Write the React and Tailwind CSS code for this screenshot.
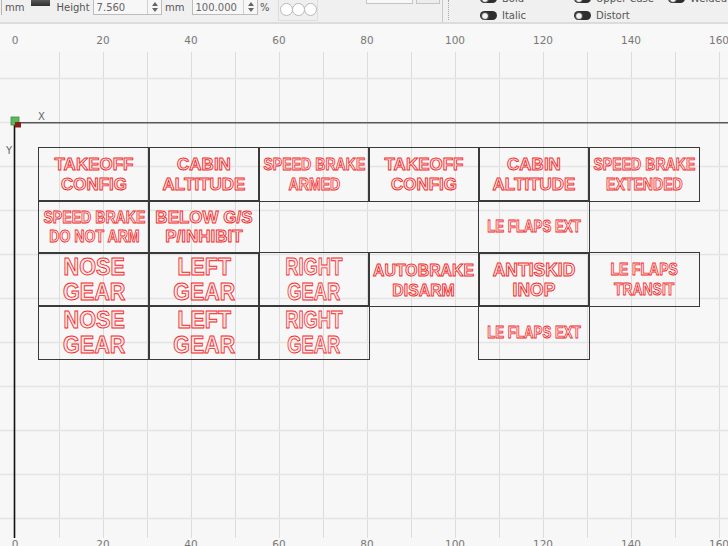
import React from "react";

const UI = "font-['DejaVu_Sans',Verdana,sans-serif]";
const TXT = "font-['Liberation_Sans',Arial,sans-serif] font-bold text-[#ffe8e8] [-webkit-text-stroke:0.9px_#ee2b2b] whitespace-nowrap";

const S = (lines, scale = "") => ({ lines, size: "text-[17px] leading-[19.5px]", scale });
const B = (lines, scale = "") => ({ lines, size: "text-[23px] leading-[25px]", scale });

const rows = [
  [
    S(["TAKEOFF", "CONFIG"]),
    S(["CABIN", "ALTITUDE"]),
    S(["SPEED BRAKE", "ARMED"], "scale-x-[0.83]"),
    S(["TAKEOFF", "CONFIG"]),
    S(["CABIN", "ALTITUDE"]),
    S(["SPEED BRAKE", "EXTENDED"], "scale-x-[0.83]"),
  ],
  [
    S(["SPEED BRAKE", "DO NOT ARM"], "scale-x-[0.83]"),
    S(["BELOW G/S", "P/INHIBIT"]),
    null,
    null,
    S(["LE FLAPS EXT"], "scale-x-[0.78]"),
    null,
  ],
  [
    B(["NOSE", "GEAR"], "scale-x-[0.94]"),
    B(["LEFT", "GEAR"], "scale-x-[0.93]"),
    B(["RIGHT", "GEAR"], "scale-x-[0.8]"),
    { lines: ["AUTOBRAKE", "DISARM"], size: "text-[16.5px] leading-[20px]", scale: "scale-x-[0.96]" },
    { lines: ["ANTISKID", "INOP"], size: "text-[17.5px] leading-[20px]", scale: "" },
    S(["LE FLAPS", "TRANSIT"], "scale-x-[0.82]"),
  ],
  [
    B(["NOSE", "GEAR"], "scale-x-[0.94]"),
    B(["LEFT", "GEAR"], "scale-x-[0.93]"),
    B(["RIGHT", "GEAR"], "scale-x-[0.8]"),
    null,
    S(["LE FLAPS EXT"], "scale-x-[0.78]"),
    null,
  ],
];

function Spinner() {
  return (
    <div className="w-[14px] h-full border-l border-[#d0d0d0] flex flex-col items-center justify-center gap-[2px]">
      <svg width="6" height="4" viewBox="0 0 6 4"><path d="M0 4 L3 0 L6 4 Z" fill="#666" /></svg>
      <svg width="6" height="4" viewBox="0 0 6 4"><path d="M0 0 L3 4 L6 0 Z" fill="#666" /></svg>
    </div>
  );
}

function Toggle() {
  return (
    <div className="relative w-[17px] h-[9px] rounded-full bg-[#2e2e2e] flex items-center">
      <div className="ml-[1px] w-[8px] h-[8px] rounded-full bg-[#f2f2f2] border border-[#444]" />
    </div>
  );
}

function ToggleItem({ label }) {
  return (
    <div className="flex items-center gap-[5px] h-[17px]">
      <Toggle />
      <span className="text-[10px] text-[#555]">{label}</span>
    </div>
  );
}

function Toolbar() {
  return (
    <div className={`${UI} h-[24px] bg-[#f0f0f0] border-b-2 border-[#dcdcdc] flex items-start overflow-hidden text-[10px] text-[#555]`}>
      <div className="h-[15px] flex items-center">
        <div className="w-[2px] h-[15px] border-r border-[#b5b5b5] self-start" />
        <span className="ml-[3px]">mm</span>
      </div>
      <div className="ml-[7px] w-[19px] h-[6px] bg-gradient-to-b from-[#5a5a5a] to-[#2f2f2f]" />
      <div className="h-[15px] flex items-center ml-[7px]">
        <span>Height</span>
      </div>
      <div className="ml-[3px] -mt-[2px] w-[73px] h-[17px] border border-[#bdbdbd] bg-[#f7f7f7] flex items-center">
        <span className="flex-1 pl-[3px] pt-[1px] text-[#666]">7.560</span>
        <Spinner />
      </div>
      <div className="h-[15px] flex items-center ml-[3px]"><span>mm</span></div>
      <div className="ml-[7px] -mt-[2px] w-[70px] h-[17px] border border-[#bdbdbd] bg-[#f7f7f7] flex items-center">
        <span className="flex-1 pl-[3px] pt-[1px] text-[#666]">100.000</span>
        <Spinner />
      </div>
      <div className="h-[15px] flex items-center ml-[2px]"><span>%</span></div>
      <div className="ml-[8px] -mt-[2px] w-[42px] h-[23px] border border-[#dedede] bg-[#efefef] flex items-start pt-[4px] pl-[1px]">
        <div className="w-[13px] h-[13px] rounded-full bg-white border border-[#b8b8b8]" />
        <div className="-ml-[1px] w-[13px] h-[13px] rounded-full bg-white border border-[#b8b8b8]" />
        <div className="-ml-[1px] w-[13px] h-[13px] rounded-full bg-white border border-[#b8b8b8]" />
      </div>
      <div className="ml-[48px] -mt-[14px] w-[50px] h-[18px] border border-[#c4c4c4] bg-[#f8f8f8]" />
      <div className="ml-[3px] -mt-[14px] w-[25px] h-[18px] border border-[#c4c4c4] bg-[#ececec]" />
      <div className="ml-[2px] w-px h-[22px] bg-[#c8c8c8]" />
      <div className="ml-[5px] h-[20px] border-l border-dotted border-[#a8a8a8]" />
      <div className="ml-[31px] -mt-[10px] grid grid-cols-[94px_94px_60px]">
        <ToggleItem label="Bold" />
        <ToggleItem label="Upper Case" />
        <ToggleItem label="Welded" />
        <ToggleItem label="Italic" />
        <ToggleItem label="Distort" />
        <div />
      </div>
    </div>
  );
}

const labels = [0, 20, 40, 60, 80, 100, 120, 140, 160];

function Ruler({ className = "" }) {
  return (
    <div className={`${UI} flex -ml-[29px] text-[10.5px] leading-[12px] text-[#777] ${className}`}>
      {labels.map((l) => (
        <div key={l} className="w-[88px] shrink-0 text-center">{l}</div>
      ))}
    </div>
  );
}

function Grid() {
  const vx = [];
  for (let x = 59; x < 728; x += 44) vx.push(x);
  const hy = [];
  for (let y = 26; y < 490; y += 44) hy.push(y);
  return (
    <svg className="absolute inset-0" width="728" height="486" viewBox="0 0 728 486">
      {vx.map((x) => (
        <line key={"v" + x} x1={x + 0.5} y1="0" x2={x + 0.5} y2="486" stroke="#dcdcdc" strokeWidth="1" />
      ))}
      {hy.map((y) => (
        <line key={"h" + y} x1="0" y1={y + 0.5} x2="728" y2={y + 0.5} stroke="#e4e4e4" strokeWidth="1.5" />
      ))}
      <line x1="15" y1="70.75" x2="728" y2="70.75" stroke="#5a5a5a" strokeWidth="1.5" />
      <line x1="14.5" y1="70" x2="14.5" y2="486" stroke="#111" strokeWidth="1.6" />
      <rect x="11" y="65" width="8" height="8" fill="#5cb85c" stroke="#3f8f3f" strokeWidth="0.8" />
      <rect x="15" y="70" width="6" height="5.5" fill="#8a1f1a" />
    </svg>
  );
}

function Cell({ c }) {
  if (!c) return <div />;
  return (
    <div className="shadow-[0_0_0_1px_#3a3a3a] flex items-center justify-center">
      <div className={`${TXT} ${c.size} ${c.scale} flex flex-col items-center`}>
        {c.lines.map((l, i) => (
          <span key={i}>{l}</span>
        ))}
      </div>
    </div>
  );
}

export default function App() {
  return (
    <div className="w-[728px] h-[546px] overflow-hidden bg-[#f7f7f7] flex flex-col">
      <Toolbar />
      <div className="h-[28px] bg-[#f8f8f8] pt-[10px] overflow-hidden">
        <Ruler />
      </div>
      <div className="relative h-[486px] shrink-0 overflow-hidden">
        <Grid />
        <span className={`${UI} absolute left-[38px] top-[57px] text-[10px] text-[#666]`}>X</span>
        <span className={`${UI} absolute left-[6px] top-[91px] text-[10px] text-[#666]`}>Y</span>
        <div className="absolute left-[39px] top-[96px] grid grid-cols-[110px_110px_110px_110px_110px_110px] grid-rows-[53px_52px_53px_53px]">
          {rows.flat().map((c, i) => (
            <Cell key={i} c={c} />
          ))}
        </div>
      </div>
      <div className="h-[8px] overflow-hidden">
        <Ruler />
      </div>
    </div>
  );
}
